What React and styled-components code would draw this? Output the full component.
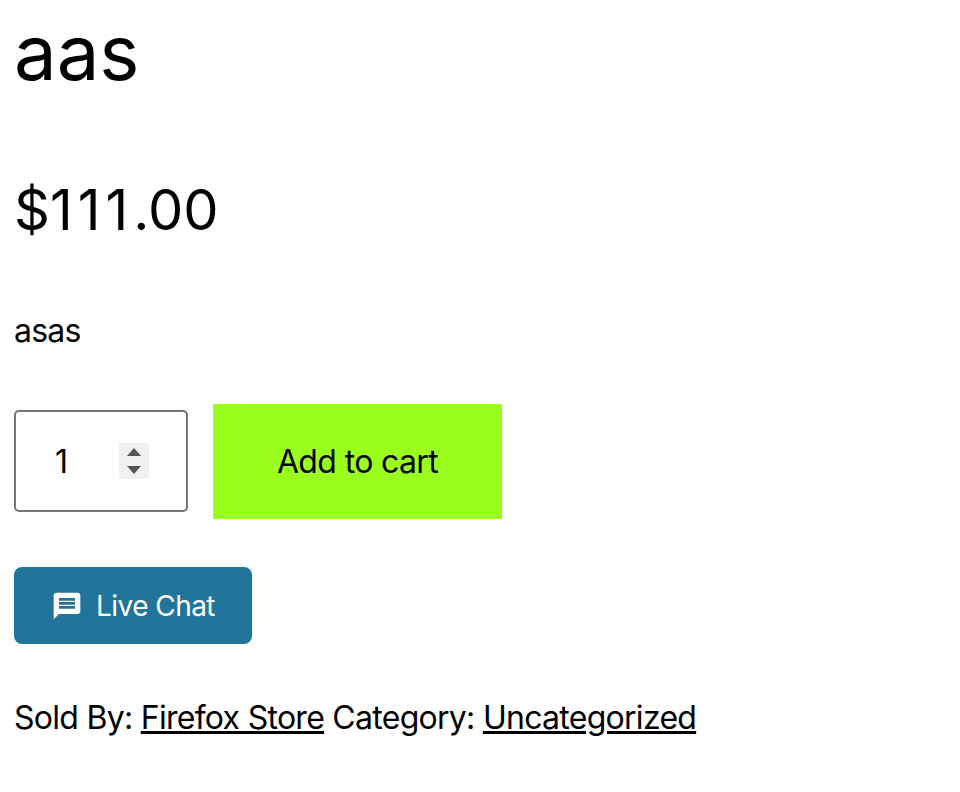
import styled, { createGlobalStyle } from "styled-components";

const GlobalStyle = createGlobalStyle`
  html, body {
    margin: 0;
    padding: 0;
    background: #fff;
  }
  body {
    font-family: Inter, "Liberation Sans", Arial, sans-serif;
    color: #000;
  }
`

const Page = styled.div`
  width: 960px;
  height: 792px;
  overflow: hidden;
  padding: 0 14px;
  box-sizing: border-box;
`
const Title = styled.h1`
  margin: 0;
  padding-top: 8px;
  font-size: 76px;
  line-height: 88px;
  font-weight: 400;
`
const Price = styled.p`
  margin: 82px 0 0;
  font-size: 56px;
  line-height: 64px;
`
const PriceOnes = styled.span`
  letter-spacing: 5px;
`
const Description = styled.p`
  margin: 71px 0 0;
  font-size: 32px;
  line-height: 36px;
  letter-spacing: -0.025em;
`
const CartForm = styled.form`
  display: flex;
  align-items: flex-start;
  gap: 25px;
  margin-top: 55px;
`
const Quantity = styled.div`
  display: flex;
  align-items: center;
  justify-content: space-between;
  width: 174px;
  height: 102px;
  margin-top: 6px;
  box-sizing: border-box;
  padding: 0 37px 0 39px;
  border: 2px solid #767676;
  border-radius: 5px;
  font-size: 32px;
`
const Spinner = styled.svg`
  display: block;
  width: 30px;
  height: 36px;
`
const AddToCart = styled.button`
  width: 289px;
  height: 115px;
  border: 0;
  padding: 0;
  background: #9bff1e;
  color: #000;
  font-family: inherit;
  font-size: 32px;
  letter-spacing: -0.02em;
`
const ChatButton = styled.a`
  display: flex;
  align-items: center;
  justify-content: center;
  gap: 13px;
  width: 238px;
  height: 77px;
  margin-top: 48px;
  border-radius: 8px;
  background: #21759b;
  color: #fff;
  font-size: 28px;
  letter-spacing: -0.02em;
`
const ChatIcon = styled.svg`
  display: block;
  width: 32px;
  height: 32px;
  fill: currentColor;
`
const Meta = styled.div`
  margin-top: 56px;
  font-size: 32px;
  line-height: 36px;
  letter-spacing: -0.0225em;
  white-space: nowrap;
`
const MetaLink = styled.a`
  color: #000;
  text-decoration: underline;
`

export default function App() {
  return (
    <Page>
      <GlobalStyle />
      <Title>aas</Title>
      <Price>$<PriceOnes>111</PriceOnes>.00</Price>
      <Description>asas</Description>
      <CartForm>
        <Quantity>
          <span>1</span>
          <Spinner viewBox="0 0 30 36">
            <rect width="30" height="36" fill="#f0f0f0" />
            <path d="M15 5 22 13H8z M15 31 8 23h14z" fill="#555" />
          </Spinner>
        </Quantity>
        <AddToCart type="button">Add to cart</AddToCart>
      </CartForm>
      <ChatButton>
        <ChatIcon viewBox="0 0 24 24">
          <path fillRule="evenodd" d="M20 2H4c-1.100 0-2 .9-2 2v18l4-4h14c1.100 0 2-.9 2-2V4c0-1.100-.9-2-2-2zM6 9h12v2H6zm0 3h12v2H6zm0-6h12v2H6z" />
        </ChatIcon>
        Live Chat
      </ChatButton>
      <Meta>
        Sold By: <MetaLink>Firefox Store</MetaLink> Category: <MetaLink>Uncategorized</MetaLink>
      </Meta>
    </Page>
  )
}
